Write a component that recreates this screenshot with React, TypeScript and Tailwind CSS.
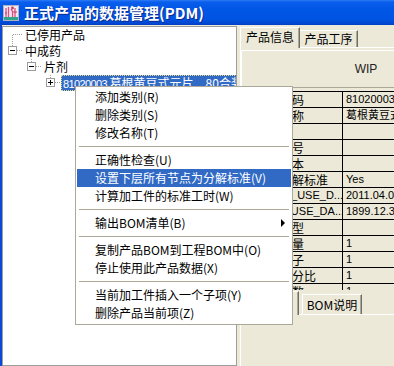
import React from 'react';

const CJK = "font-['Noto_Sans_CJK_SC',sans-serif]";
const LAT = "font-['Liberation_Sans','Noto_Sans_CJK_SC',sans-serif]";

type TreeNode = {
  indent: string;
  box?: '+' | '-';
  up?: boolean;
  down?: boolean;
  label: React.ReactNode;
  selected?: boolean;
};

const treeNodes: TreeNode[] = [
  { indent: 'pl-0', up: false, down: true, label: '已停用产品' },
  { indent: 'pl-0', box: '-', up: true, label: '中成药' },
  { indent: 'pl-[19px]', box: '-', up: true, label: '片剂' },
  {
    indent: 'pl-[38px]',
    box: '+',
    up: true,
    selected: true,
    label: (
      <span>
        <span className={`text-[11px] tracking-[-0.6px] ${LAT}`}>81020003&nbsp;</span>葛根黄豆式元片　80合装
      </span>
    ),
  },
];

const menuItems: (string | { text: string; key: string; hot?: boolean; sub?: boolean })[] = [
  { text: '添加类别', key: '(R)' },
  { text: '删除类别', key: '(S)' },
  { text: '修改名称', key: '(T)' },
  'sep',
  { text: '正确性检查', key: '(U)' },
  { text: '设置下层所有节点为分解标准', key: '(V)', hot: true },
  { text: '计算加工件的标准工时', key: '(W)' },
  'sep',
  { text: '输出BOM清单', key: '(B)', sub: true },
  'sep',
  { text: '复制产品BOM到工程BOM中', key: '(O)' },
  { text: '停止使用此产品数据', key: '(X)' },
  'sep',
  { text: '当前加工件插入一个子项', key: '(Y)' },
  { text: '删除产品当前项', key: '(Z)' },
];

// label column text is mostly hidden under the popup menu
const gridRows: { label: string; value: string; ascii?: boolean; pad?: string }[] = [
  { label: '产品编码', value: '81020003' },
  { label: '产品名称', value: '葛根黄豆式元片　80合装' },
  { label: '拼音码', value: '' },
  { label: '规格型号', value: '' },
  { label: '标准成本', value: '' },
  { label: '是否分解标准', value: 'Yes' },
  { label: 'START_USE_D...', value: '2011.04.01', ascii: true },
  { label: 'STOP_USE_DA...', value: '1899.12.30', ascii: true, pad: 'pl-[14px]' },
  { label: '产品类型', value: '' },
  { label: '基本数量', value: '1' },
  { label: '换算分子', value: '1' },
  { label: '损耗百分比', value: '1' },
  { label: '包装件数', value: '1' },
];

function AppIcon() {
  return (
    <svg width="16" height="16" viewBox="0 0 16 16" className="shrink-0">
      <rect x="0.5" y="0.5" width="15" height="15" fill="#EEEAF2" stroke="#B4B0C4" />
      <path d="M3 3v9M5.5 2v10M8 4l1.5 2.5V12M12 3v9" stroke="#E24A80" strokeWidth="1.3" fill="none" />
      <path d="M10 7h4M2 8h2" stroke="#C23A5C" strokeWidth="1" />
      <circle cx="9.5" cy="3" r="1.4" fill="#C8364F" />
      <rect x="1" y="12" width="14" height="3" fill="#2FA58A" />
    </svg>
  );
}

function Connector({ box, up, down }: { box?: '+' | '-'; up?: boolean; down?: boolean }) {
  const dot = { stroke: '#A0A0A0', strokeDasharray: '1 1', shapeRendering: 'crispEdges' as const };
  return (
    <svg width="20" height="16" className="shrink-0">
      {up && <line x1="9.5" y1="0" x2="9.5" y2={box ? 3 : 8} {...dot} />}
      {down && <line x1="9.5" y1={box ? 12 : 8} x2="9.5" y2="16" {...dot} />}
      <line x1={box ? 14 : 10} y1="7.5" x2="20" y2="7.5" {...dot} />
      {box && (
        <g shapeRendering="crispEdges">
          <rect x="5.5" y="3.5" width="8" height="8" fill="#fff" stroke="#9C9C9C" />
          <line x1="7" y1="7.5" x2="12" y2="7.5" stroke="#000" />
          {box === '+' && <line x1="9.5" y1="5" x2="9.5" y2="10" stroke="#000" />}
        </g>
      )}
    </svg>
  );
}

function Tree() {
  return (
    <div className={`mt-[1px] w-[235px] shrink-0 bg-white border border-[#9D9D9D] overflow-hidden text-[12px] ${CJK}`}>
      {treeNodes.map((n, i) => (
        <div key={i} className={`flex items-center h-[16px] ${n.indent}`}>
          <Connector box={n.box} up={n.up} down={n.down} />
          {n.selected ? (
            <span className="h-[16px] flex items-center whitespace-nowrap px-[1px] bg-[#316AC5] text-white border border-dotted border-[#E8D98A]">
              {n.label}
            </span>
          ) : (
            <span className="h-[16px] flex items-center whitespace-nowrap px-[2px]">{n.label}</span>
          )}
        </div>
      ))}
    </div>
  );
}

function ContextMenu() {
  return (
    <div className={`absolute z-20 left-[75px] top-[86px] w-[218px] bg-white border border-[#ACA899] px-[1px] pt-[1px] pb-[2px] text-[12px] ${CJK}`}>
      {menuItems.map((m, i) =>
        typeof m === 'string' ? (
          <div key={i} className="h-[9px] flex items-center mx-[2px]">
            <div className="h-px w-full bg-[#ACA899]" />
          </div>
        ) : (
          <div
            key={i}
            className={`h-[18px] flex items-center pl-[18px] whitespace-nowrap ${m.hot ? 'bg-[#316AC5] text-white' : 'text-black'}`}
          >
            <span>{m.text}</span>
            <span>{m.key}</span>
            {m.sub && (
              <svg width="4" height="8" viewBox="0 0 4 8" className="ml-auto mr-[6px]">
                <path d="M0 0L4 4L0 8Z" fill="#000" />
              </svg>
            )}
          </div>
        )
      )}
    </div>
  );
}

function RightPane() {
  return (
    <div className="ml-[3px] w-[250px] shrink-0 flex flex-col">
      {/* upper page control */}
      <div className="h-[265px] flex flex-col">
        <div className={`relative z-10 h-[22px] flex items-end text-[12px] ${CJK}`}>
          <div className="w-[60px] h-[21px] mb-[-1px] bg-[#ECE9D8] border-t border-l border-white border-r border-r-[#716F64] shadow-[inset_-1px_0_0_#ACA899] flex items-center justify-center pb-[3px]">
            产品信息
          </div>
          <div className="w-[58px] h-[17px] bg-[#ECE9D8] border-t border-white border-r border-r-[#716F64] shadow-[inset_-1px_0_0_#ACA899] flex items-center justify-center pb-[1px]">
            产品工序
          </div>
        </div>
        <div className="h-[243px] border-t border-l border-white pt-[2px] overflow-hidden">
          <div className={`h-[38px] border-t border-l border-white border-b border-b-[#ACA899] flex items-center justify-center text-[12px] text-[#222] ${LAT}`}>
            WIP
          </div>
          <div className="mt-[3px] border-t border-black">
            {gridRows.map((r, i) => (
              <div key={i} className="flex h-[16px] border-b border-black">
                <div
                  className={`w-[102px] shrink-0 border-r border-black ${r.pad ?? 'pl-[15px]'} flex items-center overflow-hidden whitespace-nowrap ${
                    r.ascii ? `text-[11px] ${LAT}` : `text-[12px] ${CJK}`
                  }`}
                >
                  {r.label}
                </div>
                <div className={`flex-1 pl-[3px] flex items-center whitespace-nowrap overflow-hidden text-[11px] ${LAT}`}>
                  {r.value}
                </div>
              </div>
            ))}
          </div>
        </div>
      </div>

      {/* lower page control */}
      <div className="flex-1 flex flex-col">
        <div className={`relative z-10 h-[24px] flex items-end text-[12px] ${CJK}`}>
          <div className="w-[59px] h-[24px] mb-[-1px] bg-[#ECE9D8] border-t border-l border-white border-r border-r-[#716F64] shadow-[inset_-1px_0_0_#ACA899] flex items-center justify-start pl-[2px]">
            产品结构
          </div>
          <div className="ml-[3px] w-[60px] h-[20px] bg-[#ECE9D8] border-t border-l border-white border-r border-r-[#716F64] shadow-[inset_-1px_0_0_#ACA899] flex items-center justify-center">
            BOM说明
          </div>
        </div>
        <div className="flex-1 border-t border-l border-white" />
      </div>
    </div>
  );
}

export default function App() {
  return (
    <div className={`relative w-[394px] h-[366px] overflow-hidden bg-[#ECE9D8] text-black leading-none select-none ${LAT}`}>
      <div className="h-[25px] flex items-center bg-[linear-gradient(180deg,#2C7BF5_0%,#0A5EEC_8%,#0056E6_35%,#0054E3_75%,#004AD6_90%,#003FC4_100%)]">
        <div className="ml-[3px]">
          <AppIcon />
        </div>
        <span className={`ml-[5px] text-[15px] font-bold text-white whitespace-nowrap [text-shadow:1px_1px_0_#0B2A8E] ${CJK}`}>
          正式产品的数据管理(PDM)
        </span>
      </div>
      <div className="flex h-[341px]">
        <div className="w-[2px] shrink-0 bg-[#0A48D8]" />
        <Tree />
        <RightPane />
      </div>
      <ContextMenu />
    </div>
  );
}
